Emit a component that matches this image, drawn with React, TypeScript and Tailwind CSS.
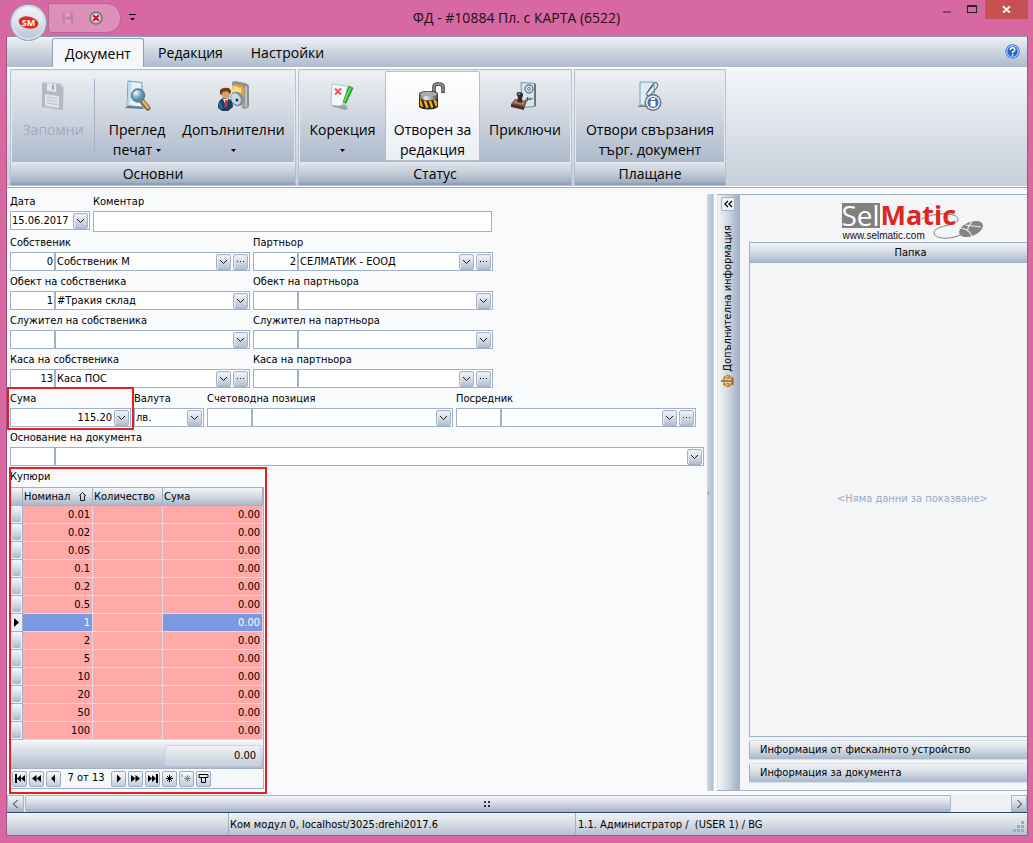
import React from "react";

type FieldProps = {
  id: string;
  label: string;
  code?: string;
  value?: string;
  more?: boolean;
  className?: string;
};

const nominals = ["0.01", "0.02", "0.05", "0.1", "0.2", "0.5", "1", "2", "5", "10", "20", "50", "100"];

const glossy = "bg-linear-to-b from-[#f3f5f8] via-[#d3dae4] to-[#a9b7cc]";

function Chevron() {
  return (
    <svg width="9" height="6" viewBox="0 0 9 6" fill="none" stroke="#1d1d1d" strokeWidth="1" aria-hidden="true">
      <path d="M1 1l3.500 3.500L8 1" />
    </svg>
  );
}

function Dots() {
  return (
    <svg width="9" height="3" viewBox="0 0 9 3" fill="#222" aria-hidden="true">
      <path d="M1 1h1v1H1zM4 1h1v1H4zM7 1h1v1H7z" />
    </svg>
  );
}

function MiniButton({ label, children }: { label: string; children: React.ReactNode }) {
  return (
    <button
      type="button"
      aria-label={label}
      className="flex h-4 w-[15px] shrink-0 items-center justify-center rounded-[2px] border border-[#a4b3c8] bg-linear-to-b from-[#f4f6f9] to-[#b4c0d2] shadow-[inset_1px_1px_0_#e4eaf2]"
    >
      {children}
    </button>
  );
}

function Label({ id, children }: { id: string; children: React.ReactNode }) {
  return (
    <label htmlFor={id} className="block h-5 leading-[22px] whitespace-nowrap">
      {children}
    </label>
  );
}

function Lookup({ id, label, code = "", value = "", more, className = "" }: FieldProps) {
  return (
    <div className={className}>
      <Label id={id}>{label}</Label>
      <div className="flex h-[19px] items-center border border-[#9fb1c7] bg-white pr-px">
        <input aria-label={label + " №"} defaultValue={code} className="h-full w-[43px] shrink-0 bg-transparent pr-px text-right outline-none" />
        <input
          id={id}
          defaultValue={value}
          className="h-full min-w-0 flex-1 border-l-2 border-[#9fb1c7] bg-transparent pl-px outline-none"
        />
        <span className="flex gap-0.5">
          <MiniButton label={label + " ▾"}>
            <Chevron />
          </MiniButton>
          {more && (
            <MiniButton label={label + " …"}>
              <Dots />
            </MiniButton>
          )}
        </span>
      </div>
    </div>
  );
}

function Caret() {
  return (
    <svg width="5" height="3" viewBox="0 0 5 3" className="inline-block" aria-hidden="true">
      <path d="M0 0h5L2.500 3z" fill="#000" />
    </svg>
  );
}

function FloppyIcon() {
  return (
    <svg width="32" height="32" viewBox="0 0 32 32" aria-hidden="true">
      <path d="M5 3l17 1 4 4v21l-1 1-20-3z" fill="#b3b9c2" />
      <path d="M5 3l2-1 17 1 3 4-1 22V8l-4-4z" fill="#c9ced5" />
      <path d="M10 3.500l9 .5v8l-9-1z" fill="#e3e6ea" />
      <path d="M15 4.500l2 .2v5l-2-.3z" fill="#a2a9b3" />
      <path d="M8 14l14 2v12L8 26z" fill="#dfe2e6" />
      <path d="M10 17l10 1.500M10 20l10 1.500M10 23l10 1.500" stroke="#bcc2ca" />
    </svg>
  );
}

function PreviewIcon() {
  return (
    <svg width="32" height="32" viewBox="0 0 32 32" aria-hidden="true">
      <defs>
        <radialGradient id="lens" cx=".35" cy=".3">
          <stop offset="0" stopColor="#f4fbff" />
          <stop offset=".5" stopColor="#9bc4dc" />
          <stop offset="1" stopColor="#5b90b4" />
        </radialGradient>
      </defs>
      <path d="M4 28l4-3h12l3 4z" fill="#66727e" />
      <path d="M7 1l14 1.500V27L6 25.500z" fill="#e7f3fa" stroke="#6ba5c4" />
      <path d="M7.500 2l3 .3L9 25l-2.500-.2z" fill="#bddceb" />
      <path d="M20 20l7 8" stroke="#6d5526" strokeWidth="5" strokeLinecap="round" />
      <path d="M20.500 20l6.500 7.500" stroke="#d9b56a" strokeWidth="3" strokeLinecap="round" />
      <circle cx="17" cy="15.500" r="6.500" fill="url(#lens)" stroke="#647580" strokeWidth="1.400" />
    </svg>
  );
}

function ExtrasIcon() {
  return (
    <svg width="34" height="32" viewBox="0 0 34 32" aria-hidden="true">
      <path d="M15 3q0-2 3-2l10 2q4 1 4 4v20l-4 2-3-1V8l-10-2z" fill="#8d9298" />
      <path d="M16 4l9 2q2 1 2 3v18l-12-5z" fill="#f6a41c" />
      <path d="M17 6l7 2v9l-8-5z" fill="#ffdf7c" />
      <path d="M28 6l2 1v20l-2 1z" fill="#bfc3c7" />
      <ellipse cx="20" cy="19" rx="6.500" ry="7.500" fill="#7e8f9f" transform="rotate(-30 20 19)" />
      <ellipse cx="19" cy="19" rx="4.500" ry="6" fill="#c7dbe8" transform="rotate(-30 19 19)" />
      <circle cx="20" cy="20" r="1.500" fill="#26313c" />
      <path d="M1 25q1-6 6-7l5 1q4 2 4 8l-5 4H5l-4-3z" fill="#1e3e63" />
      <path d="M1 25l3-4 2 8H3z" fill="#315f8e" />
      <path d="M6 19h5l-2 7z" fill="#f5f7fa" />
      <path d="M8 20h2l.5 6-1.500 2-1.500-2z" fill="#d03b2d" />
      <path d="M4 10q5-4 9 0v5q-1 4-4 4-4-1-5-5z" fill="#dda06c" />
      <path d="M3 14q-1-6 4-6 7-1 7 4l-1 2-3-3-4 1-2 3z" fill="#6f3d1e" />
    </svg>
  );
}

function CorrectionIcon() {
  return (
    <svg width="32" height="32" viewBox="0 0 32 32" aria-hidden="true">
      <path d="M5 4l15 2-1 22-15-3z" fill="#f2f8fc" stroke="#a5c8da" />
      <path d="M4 26l14-1 3 4-3 1z" fill="#91a6b3" />
      <path d="M8 8.500l6 6M14 8.500l-6 6" stroke="#f5585c" strokeWidth="2" />
      <path d="M22 6l4 2-7 15-3 2 .5-4z" fill="#27b925" stroke="#167c22" strokeWidth=".7" />
      <path d="M23 7l1 .5-6 14-1-.5z" fill="#83f06e" />
      <path d="M16 22l3 1.500-3 2z" fill="#edc57a" />
    </svg>
  );
}

function PadlockIcon() {
  return (
    <svg width="32" height="32" viewBox="0 0 32 32" aria-hidden="true">
      <defs>
        <linearGradient id="steel">
          <stop offset="0" stopColor="#5f6262" />
          <stop offset=".35" stopColor="#e9ebeb" />
          <stop offset="1" stopColor="#535656" />
        </linearGradient>
        <clipPath id="bodyClip">
          <path d="M3 19q9 4 17 0v7q-8 4-17 0z" />
        </clipPath>
      </defs>
      <path d="M17 15V7q0-3 4.500-3T26 7v6" fill="none" stroke="#3f4243" strokeWidth="3.600" />
      <path d="M17 15V7q0-3 4.500-3T26 7v5" fill="none" stroke="#9b9fa1" strokeWidth="1.400" />
      <path d="M2 14q0-3 9.500-3t9.500 3v13q-3 2.500-9.500 2.500T2 27z" fill="#2c2a26" />
      <path d="M2.500 14q9-5 18 0v4.500q-8 4-18 0z" fill="url(#steel)" />
      <ellipse cx="11.500" cy="14" rx="8.500" ry="2.300" fill="#a9acac" />
      <g clipPath="url(#bodyClip)" stroke="#ffae12" strokeWidth="2.400">
        <path d="M2 18l4 12M7 18l4 12M12 18l4 12M17 18l4 12" />
      </g>
    </svg>
  );
}

function StampIcon() {
  return (
    <svg width="32" height="32" viewBox="0 0 32 32" aria-hidden="true">
      <path d="M12 2.500l14 1v23l-13 1z" fill="#d6e6ef" stroke="#6d91a5" />
      <path d="M26 4v22" stroke="#667a86" strokeWidth="2" />
      <circle cx="20" cy="9" r="4" fill="none" stroke="#73828e" strokeWidth="1.500" />
      <circle cx="20" cy="9" r="1.500" fill="none" stroke="#73828e" />
      <path d="M16 21l3-4-1 4 3-3v2l3-2" fill="none" stroke="#45525d" />
      <path d="M2 24l4-5 12 2-3 8-13-3z" fill="#7c4d45" />
      <path d="M2 24l13 3v3L2 27z" fill="#4e302e" />
      <path d="M4 23l3-3 9 2-2 3z" fill="#b58073" />
      <path d="M8 22l1-5q-4-5 2-5 5 1 2 6v5z" fill="#332c2e" />
      <ellipse cx="10" cy="14" rx="1.500" ry="1" fill="#998888" />
    </svg>
  );
}

function LinkedDocIcon() {
  return (
    <svg width="32" height="32" viewBox="0 0 32 32" aria-hidden="true">
      <path d="M3 27l5-3h9v3z" fill="#707c87" />
      <path d="M6 2h14l1 24-15-1z" fill="#ddebf2" stroke="#75a6be" />
      <path d="M14 11l5-7q3-3 4.500 0 1 2-1 4l-6 7q-3 2-4-1 0-1 2-3l5-6" fill="none" stroke="#586672" strokeWidth="1.100" />
      <circle cx="19" cy="22.500" r="8.500" fill="#737679" />
      <circle cx="19" cy="22.500" r="7" fill="#edf0f3" />
      <circle cx="19" cy="22.500" r="5.500" fill="#4172c2" />
      <path d="M17 18h4v2h-4zM16.500 21h5v5.500h-5z" fill="#fff" />
    </svg>
  );
}

function ScalesIcon() {
  return (
    <svg width="14" height="14" viewBox="0 0 14 14" fill="none" stroke="#bb7b23" aria-hidden="true">
      <path d="M0 7h12M11 3v8" strokeWidth="2" />
      <path d="M3 3v8" strokeWidth="1.500" />
      <path d="M3 3l4-2v4zM3 11l4-2v4z" fill="#f5d986" />
      <path d="M8 1q3 2 0 4zM8 9q3 2 0 4z" fill="#e9b450" />
      <path d="M12 4v7" stroke="#c23c2b" />
    </svg>
  );
}

function RibbonButton({
  icon,
  lines,
  caret,
  active,
  disabled,
  className,
}: {
  icon: React.ReactNode;
  lines: string[];
  caret?: "inline" | "below";
  active?: boolean;
  disabled?: boolean;
  className: string;
}) {
  return (
    <button
      type="button"
      disabled={disabled}
      className={`flex h-[90px] shrink-0 flex-col items-center border pt-2 leading-5 whitespace-nowrap ${
        active ? "rounded-[2px] border-[#b4c0d0] bg-linear-to-b from-white to-[#ebeef3]" : "border-transparent"
      } ${disabled ? "text-[#9dabc2]" : "text-black"} ${className}`}
    >
      {icon}
      <span className="mt-2 block">{lines[0]}</span>
      <span className="flex h-5 items-center justify-center gap-1">
        {lines[1]}
        {caret && <Caret />}
      </span>
    </button>
  );
}

function RibbonGroup({ title, className, children }: { title: string; className: string; children: React.ReactNode }) {
  return (
    <section className={`flex shrink-0 flex-col border border-[#b3c0d2] ${className}`}>
      <div className="flex h-[93px] border border-[#e6ebf1] bg-linear-to-b from-[#edf0f3] via-[#d0d6e0] to-[#adb9cb]">{children}</div>
      <h2 className="h-[22px] border-b-2 border-[#8fa1ba] bg-linear-to-b from-[#dde3ea] via-[#c5ced9] to-[#9cadc3] text-center leading-[22px] text-black">{title}</h2>
    </section>
  );
}

function SelMaticLogo() {
  return (
    <div role="img" aria-label="SelMatic" className="relative w-36 font-[family-name:Open_Sans,Noto_Sans,sans-serif]">
      <svg width="144" height="42" viewBox="0 0 144 42" className="absolute top-0 left-0" aria-hidden="true">
        <path d="M79 19c18-8 38-6 37 1-1 6-24 5-24 13 0 6 16 7 26 2" fill="none" stroke="#85827f" />
        <ellipse cx="129" cy="29" rx="12.500" ry="7" transform="rotate(-22 129 29)" fill="#85827f" />
        <path d="M117 28q9 0 13 8M123 25l16 2M130 22q-5 5-4 8" fill="none" stroke="#eeeeee" strokeWidth="1.200" />
      </svg>
      <div className="relative flex pt-[3px] leading-6">
        <span className="h-[25px] w-[38px] bg-[#83807c] text-center text-[28px] text-white">Sel</span>
        <span className="ml-px h-[25px] text-[27px] font-bold text-[#df251e]">Matic</span>
      </div>
      <span className="relative block pt-0.5 pl-px font-[family-name:Liberation_Sans,sans-serif] text-[10px] leading-3 text-[#111111]">www.selmatic.com</span>
    </div>
  );
}

const navPaths: Record<string, string> = {
  first: "M1 1h2v9H1zM3 5.500L7 2v7zM7 5.500L11 2v7z",
  fastBack: "M1 5.500L5.500 2v7zM5.500 5.500L10 2v7z",
  back: "M3 5.500L7 1.500v8z",
  next: "M8 5.500L4 1.500v8z",
  fastNext: "M5.500 5.500L1 2v7zM10 5.500L5.500 2v7z",
  last: "M9 1h2v9H9zM9 5.500L5 2v7zM5 5.500L1 2v7z",
};

function NavButton({ kind, label }: { kind: string; label: string }) {
  return (
    <button
      type="button"
      aria-label={label}
      className="flex h-4 w-[15px] items-center justify-center rounded-[2px] border border-[#9aabc3] bg-linear-to-b from-[#f8f9fb] to-[#c3cddb]"
    >
      <svg width="11" height="11" viewBox="0 0 11 11" aria-hidden="true">
        {navPaths[kind] && <path d={navPaths[kind]} fill="#000" />}
        {kind === "add" && <path d="M5.500 2v7M2 5.500h7M3 3l5 5M8 3L3 8" stroke="#000" />}
        {kind === "mark" && <path d="M1 1v3M6.500 2v7M3 5.500h7M4 3l5 5M9 3L4 8" stroke="#858a92" />}
        {kind === "filter" && <path d="M1 1.500h9v3H1zM3.500 4.500v5h4v-5" fill="none" stroke="#000" />}
      </svg>
    </button>
  );
}

function DenominationGrid() {
  const edge = "border-r border-b border-[#dbdce4]";
  const footer = "border-t-2 border-b border-t-[#f5f7f9] border-b-[#9fb1c7] bg-linear-to-b from-[#eff2f5] to-[#b1bdce]";
  return (
    <div className="mt-px ml-px w-[253px] border-t border-r border-[#9fb1c7] bg-[#f5f7f9]">
      <table aria-labelledby="notes-title" className="w-full table-fixed border-separate border-spacing-0">
        <colgroup>
          <col className="w-3" />
          <col className="w-[70px]" />
          <col className="w-[70px]" />
          <col />
        </colgroup>
        <thead>
          <tr className="h-[18px]">
            {["", "Номинал", "Количество", "Сума"].map((h) => (
              <th key={h} className={`h-[18px] border-r border-b border-[#9fb1c7] p-0 text-left font-normal whitespace-nowrap ${glossy}`}>
                <span className="flex h-[17px] items-center justify-between pr-1.5 pl-px leading-[18px]">
                  {h}
                  {h === "Номинал" && (
                    <svg width="7" height="9" viewBox="0 0 7 9" fill="none" stroke="#222" aria-hidden="true">
                      <path d="M1.500 8.500v-5H.5l3-3 3 3h-1v5z" />
                    </svg>
                  )}
                </span>
              </th>
            ))}
          </tr>
        </thead>
        <tbody>
          {nominals.map((n) => {
            const on = n === "1";
            const tone = on ? "bg-[#7b98e0] text-white" : "bg-[#ffa9a9] text-black";
            return (
              <tr key={n} className="h-[18px] leading-4">
                <td className="border-r border-b border-[#9fb1c7] bg-[#eef1f5] p-px">
                  {on ? (
                    <svg width="7" height="9" viewBox="0 0 7 9" className="mx-auto block" aria-hidden="true">
                      <path d="M1 0l5 4.500L1 9z" />
                    </svg>
                  ) : (
                    <span className={`block h-[15px] rounded-[2px] ${glossy}`} />
                  )}
                </td>
                <td className={`p-0 pt-px pr-0.5 text-right ${edge} ${tone}`}>{n}</td>
                <td className={`bg-[#ffa9a9] p-0 ${edge}`} />
                <td className={`p-0 pt-px pr-0.5 text-right ${edge} ${tone}`}>0.00</td>
              </tr>
            );
          })}
        </tbody>
        <tfoot>
          <tr className="h-[29px]">
            <td colSpan={3} className={`p-0 ${footer}`} />
            <td className={`p-0 pr-0.5 pl-0.5 ${footer}`}>
              <div className="h-[21px] rounded-[2px] border border-[#cfd6df] bg-linear-to-b from-[#f0f2f5] to-[#c8d0dc] pr-1 text-right leading-5">0.00</div>
            </td>
          </tr>
        </tfoot>
      </table>
      <div className="flex h-5 items-center gap-0.5 border-b border-[#9fb1c7] pl-px">
        <NavButton kind="first" label="Първи" />
        <NavButton kind="fastBack" label="Предишна страница" />
        <NavButton kind="back" label="Предишен" />
        <span className="w-[46px] text-center whitespace-nowrap">7 от 13</span>
        <NavButton kind="next" label="Следващ" />
        <NavButton kind="fastNext" label="Следваща страница" />
        <NavButton kind="last" label="Последен" />
        <NavButton kind="add" label="Добави" />
        <NavButton kind="mark" label="Отбележи" />
        <NavButton kind="filter" label="Филтър" />
      </div>
    </div>
  );
}

function TitleBar() {
  return (
    <header className="relative grid h-9 grid-cols-[1fr_auto_1fr] items-start">
      <div className="flex h-9 pt-[3px] pl-12">
        <div className="flex h-[30px] w-[73px] items-center gap-[14px] rounded-tr-[14px] rounded-br-[14px] rounded-bl-sm border border-[#b76596] bg-[#dc90b7] pl-3">
          <button type="button" disabled aria-label="Запомни">
            <svg width="14" height="15" viewBox="0 0 14 15" aria-hidden="true">
              <path d="M1 2l9-1 2 2v11L2 12z" fill="#c383a5" />
              <path d="M4 2l5-.5v4L4 6zM4 8l6 1v4l-6-1z" fill="#dda0bf" />
            </svg>
          </button>
          <button type="button" aria-label="Откажи">
            <svg width="14" height="14" viewBox="0 0 16 16" aria-hidden="true">
              <circle cx="8" cy="8" r="7.500" fill="#5d5d5d" />
              <circle cx="8" cy="8" r="6.300" fill="#d5d5d5" />
              <circle cx="8" cy="8" r="5" fill="#fff" stroke="#777777" strokeWidth=".8" />
              <path d="M5 5l6 6M11 5l-6 6" stroke="#d0142c" strokeWidth="2.600" />
            </svg>
          </button>
        </div>
        <button type="button" aria-label="Лента за бърз достъп" className="ml-2 flex h-7 items-center">
          <svg width="7" height="7" viewBox="0 0 7 7" aria-hidden="true">
            <path d="M0 0h7v1H0zM1 4h5L3.500 6.500z" />
          </svg>
        </button>
      </div>
      <h1 className="pt-2 font-[family-name:Open_Sans,Noto_Sans,sans-serif] text-[14px] leading-5 text-[#1c0d15]">ФД - #10884 Пл. с КАРТА (6522)</h1>
      <div className="flex justify-end pr-[5px]">
        <button type="button" aria-label="Минимизирай" className="flex h-[18px] w-[25px] items-center justify-center">
          <span className="mt-1.5 h-0.5 w-2 bg-[#85436a]" />
        </button>
        <button type="button" aria-label="Максимизирай" className="flex h-[18px] w-[26px] items-center justify-center">
          <span className="h-2 w-2.5 border border-t-2 border-[#2b2025]" />
        </button>
        <button type="button" aria-label="Затвори" className="flex h-[19px] w-[43px] items-center justify-center bg-[#c75050]">
          <svg width="9" height="7" viewBox="0 0 9 7" stroke="#fff" strokeWidth="1.800" aria-hidden="true">
            <path d="M1 .3l7 6.400M8 .3L1 6.700" />
          </svg>
        </button>
      </div>
      <button type="button" aria-label="Меню" className="absolute top-1 left-2.5 z-10 flex size-[37px] items-center justify-center rounded-full border border-[#8fa0b8] bg-linear-to-b from-[#f6f8fa] via-[#dce2ea] to-[#b6c3d4] shadow-[inset_0_0_0_2px_#d6deea]">
        <svg width="21" height="15" viewBox="0 0 21 15" aria-hidden="true">
          <ellipse cx="10.500" cy="7.500" rx="10" ry="6" fill="#e22b20" transform="rotate(12 10.500 7.500)" />
          <text x="10.500" y="11" textAnchor="middle" fontFamily="Open Sans, sans-serif" fontSize="9" fontWeight="700" fill="#fff">SM</text>
        </svg>
      </button>
    </header>
  );
}

export default function App() {
  return (
    <div className="flex min-h-screen flex-col bg-[#d768a1] font-[family-name:DejaVu_Sans_Condensed,Noto_Sans,sans-serif] text-[11px] text-black">
      <TitleBar />
      <div className="mr-[5px] mb-[7px] ml-1.5 flex flex-1 flex-col overflow-hidden border-x border-b border-[#a75282] bg-[#f9fafc]">
        <nav className="flex h-[31px] items-end border-t border-[#8d9db5] bg-linear-to-b from-[#eff2f5] via-[#ccd4df] to-[#aebbcf] pl-[45px] font-[family-name:Open_Sans,Noto_Sans,sans-serif] text-[14px]">
          <button type="button" className="h-[29px] w-[92px] rounded-t-[3px] border border-b-0 border-[#8fa3c0] bg-[#f4f6f8]">Документ</button>
          <button type="button" className="h-[29px] w-[93px]">Редакция</button>
          <button type="button" className="h-[29px] w-[101px]">Настройки</button>
          <button type="button" aria-label="Помощ" className="mr-[7px] mb-2 ml-auto">
            <svg width="15" height="15" viewBox="0 0 15 15" aria-hidden="true">
              <circle cx="7.500" cy="7.500" r="7.200" fill="#3f78cf" />
              <circle cx="7.500" cy="7.500" r="5.700" fill="#2c62c4" stroke="#dce9fb" />
              <path d="M5.300 6q0-2.300 2.300-2.300T9.800 6Q9.600 7.200 7.600 8v1.300M7.600 10.300v1.400" fill="none" stroke="#fff" strokeWidth="1.500" />
            </svg>
          </button>
        </nav>

        <div className="flex h-[121px] gap-0.5 border-b border-[#9aaac4] bg-linear-to-b from-[#f5f7f9] to-[#c7cfdb] pt-0.5 pl-[3px] font-[family-name:Open_Sans,Noto_Sans,sans-serif] text-[14px] shadow-[inset_0_1px_0_#fff,inset_0_-1px_0_#fff]">
          <RibbonGroup title="Основни" className="h-[117px] w-[286px]">
            <RibbonButton icon={<FloppyIcon />} lines={["Запомни"]} disabled className="w-[82px]" />
            <span className="my-2 w-px bg-[#a5b3c8]" />
            <RibbonButton icon={<PreviewIcon />} lines={["Преглед", "печат"]} caret="inline" className="w-[84px]" />
            <RibbonButton icon={<ExtrasIcon />} lines={["Допълнителни"]} caret="below" className="w-[109px]" />
          </RibbonGroup>
          <RibbonGroup title="Статус" className="h-[117px] w-[274px]">
            <RibbonButton icon={<CorrectionIcon />} lines={["Корекция"]} caret="below" className="w-[85px]" />
            <RibbonButton icon={<PadlockIcon />} lines={["Отворен за", "редакция"]} active className="w-[95px]" />
            <RibbonButton icon={<StampIcon />} lines={["Приключи"]} className="w-[90px]" />
          </RibbonGroup>
          <RibbonGroup title="Плащане" className="h-[117px] w-[152px]">
            <RibbonButton icon={<LinkedDocIcon />} lines={["Отвори свързания", "търг. документ"]} className="w-full" />
          </RibbonGroup>
        </div>

        <main className="flex flex-1">
          <form className="relative min-w-0 flex-1 pt-[3px] pl-[3px]">
            <div className="flex gap-[3px]">
              <div className="w-20">
                <Label id="date">Дата</Label>
                <div className="flex h-[19px] items-center border border-[#9fb1c7] bg-white pr-px">
                  <input id="date" defaultValue="15.06.2017" className="h-full w-full min-w-0 bg-transparent pl-px outline-none" />
                  <MiniButton label="Избор на дата">
                    <Chevron />
                  </MiniButton>
                </div>
              </div>
              <div className="w-[399px]">
                <Label id="comment">Коментар</Label>
                <input id="comment" className="block h-[21px] w-full border border-[#9fb1c7] bg-white px-1 outline-none" />
              </div>
            </div>
            <div className="grid grid-cols-[240px_240px] gap-x-[3px]">
              <Lookup id="owner" label="Собственик" code="0" value="Собственик М" more />
              <Lookup id="partner" label="Партньор" code="2" value="СЕЛМАТИК - ЕООД" more />
              <Lookup id="owner-site" label="Обект на собственика" code="1" value="#Тракия склад" />
              <Lookup id="partner-site" label="Обект на партньора" />
              <Lookup id="owner-clerk" label="Служител на собственика" />
              <Lookup id="partner-clerk" label="Служител на партньора" />
              <Lookup id="owner-cash" label="Каса на собственика" code="13" value="Каса ПОС" more />
              <Lookup id="partner-cash" label="Каса на партньора" more />
            </div>
            <div className="flex gap-[3px]">
              <div className="relative w-[121px]">
                <Label id="sum">Сума</Label>
                <div className="flex h-[19px] items-center border border-[#9fb1c7] bg-white pr-px">
                  <input id="sum" defaultValue="115.20" className="h-full w-full min-w-0 bg-transparent pr-0.5 text-right outline-none" />
                  <MiniButton label="Калкулатор">
                    <Chevron />
                  </MiniButton>
                </div>
                <span className="pointer-events-none absolute -inset-x-[3px] -top-px -bottom-[3px] z-10 border-2 border-[#ea1c24]" />
              </div>
              <div className="w-[70px]">
                <Label id="currency">Валута</Label>
                <div className="relative">
                  <select id="currency" className="block h-[19px] w-full appearance-none border border-[#9fb1c7] bg-white pt-px pl-px outline-none">
                    <option>лв.</option>
                  </select>
                  <span className="pointer-events-none absolute top-0.5 right-0.5 flex h-4 w-[15px] items-center justify-center rounded-[2px] border border-[#a4b3c8] bg-linear-to-b from-[#f4f6f9] to-[#b4c0d2]">
                    <Chevron />
                  </span>
                </div>
              </div>
              <Lookup id="account" label="Счетоводна позиция" className="w-[246px]" />
              <Lookup id="agent" label="Посредник" more className="w-[240px]" />
            </div>
            <Lookup id="reason" label="Основание на документа" className="mr-[3px]" />
            <section className="relative w-[256px] pb-1">
              <h2 id="notes-title" className="h-5 leading-[22px]">Купюри</h2>
              <DenominationGrid />
              <span className="pointer-events-none absolute -inset-x-px top-px -bottom-px z-10 border-2 border-[#ea1c24]" />
            </section>
          </form>

          <div className="mt-1.5 mb-[3px] flex w-[7px] shrink-0 items-center border-x border-[#ccd5e1] bg-linear-to-r from-[#ccd5e1] to-[#b0bdd0]">
            <span className="h-1 w-1 border-l border-[#8d9db5]" />
          </div>

          <aside className="mt-1.5 mb-[3px] ml-[3px] flex w-[310px] shrink-0 border-t border-b border-[#9fb1c7] bg-[#f4f5f7]">
            <div className="flex w-[23px] shrink-0 flex-col items-center rounded-l-[3px] border-r-2 border-l border-[#a5b3c8] border-l-[#dbe1e9] bg-linear-to-r from-[#f2f4f7] via-[#d2d9e3] to-[#a4b2c8] pt-0.5">
              <button type="button" aria-label="Разгъни" className="flex size-3.5 items-center justify-center rounded-[2px] border border-[#9fb1c7] bg-[#f0f3f7]">
                <svg width="9" height="8" viewBox="0 0 9 8" fill="none" stroke="#000" strokeWidth="1.300" aria-hidden="true">
                  <path d="M4 1L1 4l3 3M8 1L5 4l3 3" />
                </svg>
              </button>
              <span className="mt-3.5 mb-0.5 rotate-180 leading-4 whitespace-nowrap [writing-mode:vertical-rl]">Допълнителна информация</span>
              <ScalesIcon />
            </div>
            <div className="flex min-w-0 flex-1 flex-col pl-[9px]">
              <div className="flex h-[47px] justify-center pt-[5px] pl-[51px]">
                <SelMaticLogo />
              </div>
              <section className="flex flex-1 flex-col border border-r-0 border-[#9fb1c7]">
                <h2 className={`h-5 border-b border-[#9fb1c7] pl-11 text-center leading-5 ${glossy}`}>Папка</h2>
                <p className="flex flex-1 items-center justify-center pl-12 text-[#9aaac2]">&lt;Няма данни за показване&gt;</p>
              </section>
              <button type="button" className={`mt-[3px] h-5 rounded-l-[2px] border border-r-0 border-[#d7dee8] border-l-[#9fb1c7] pl-2.5 text-left ${glossy}`}>Информация от фискалното устройство</button>
              <button type="button" className={`mt-[3px] mb-[7px] h-5 rounded-l-[2px] border border-r-0 border-[#d7dee8] border-l-[#9fb1c7] pl-2.5 text-left ${glossy}`}>Информация за документа</button>
            </div>
          </aside>
        </main>

        <div className="mt-px flex h-[17px] shrink-0 bg-[#eef0f3]">
          <button type="button" aria-label="Наляво" className={`flex w-[17px] items-center justify-center border border-[#a7b5ca] ${glossy}`}>
            <svg width="5" height="8" viewBox="0 0 5 8" fill="none" stroke="#222" aria-hidden="true">
              <path d="M4.500 0l-4 4 4 4" />
            </svg>
          </button>
          <div className={`ml-px flex flex-1 items-center justify-center rounded-[2px] border border-[#a7b5ca] ${glossy}`}>
            <svg width="8" height="6" viewBox="0 0 8 6" fill="#26303e" aria-hidden="true">
              <path d="M0 0h2v2H0zM4 0h2v2H4zM0 4h2v2H0zM4 4h2v2H4z" />
            </svg>
          </div>
          <button type="button" aria-label="Надясно" className={`ml-[60px] flex w-4 items-center justify-center border border-[#a7b5ca] ${glossy}`}>
            <svg width="5" height="8" viewBox="0 0 5 8" fill="none" stroke="#222" aria-hidden="true">
              <path d="M.5 0l4 4-4 4" />
            </svg>
          </button>
        </div>

        <footer className="flex h-[23px] shrink-0 items-stretch border-t border-[#2c4774] bg-linear-to-b from-[#f2f4f6] via-[#d6dce5] to-[#b6c1d1] leading-6">
          <span className="w-[221px]" />
          <span className="w-[347px] border-l border-[#9fb1c7] pl-px">Ком модул 0, localhost/3025:drehi2017.6</span>
          <span className="flex-1 border-l border-[#9fb1c7] pl-0.5 whitespace-pre">1.1. Администратор /  (USER 1) / BG</span>
          <svg width="12" height="12" viewBox="0 0 12 12" className="mr-0.5 mb-0.5 self-end" fill="#9eacc2" aria-hidden="true">
            <path d="M8 0h3v3H8zM4 4h3v3H4zM8 4h3v3H8zM0 8h3v3H0zM4 8h3v3H4zM8 8h3v3H8z" />
          </svg>
        </footer>
      </div>
    </div>
  );
}
